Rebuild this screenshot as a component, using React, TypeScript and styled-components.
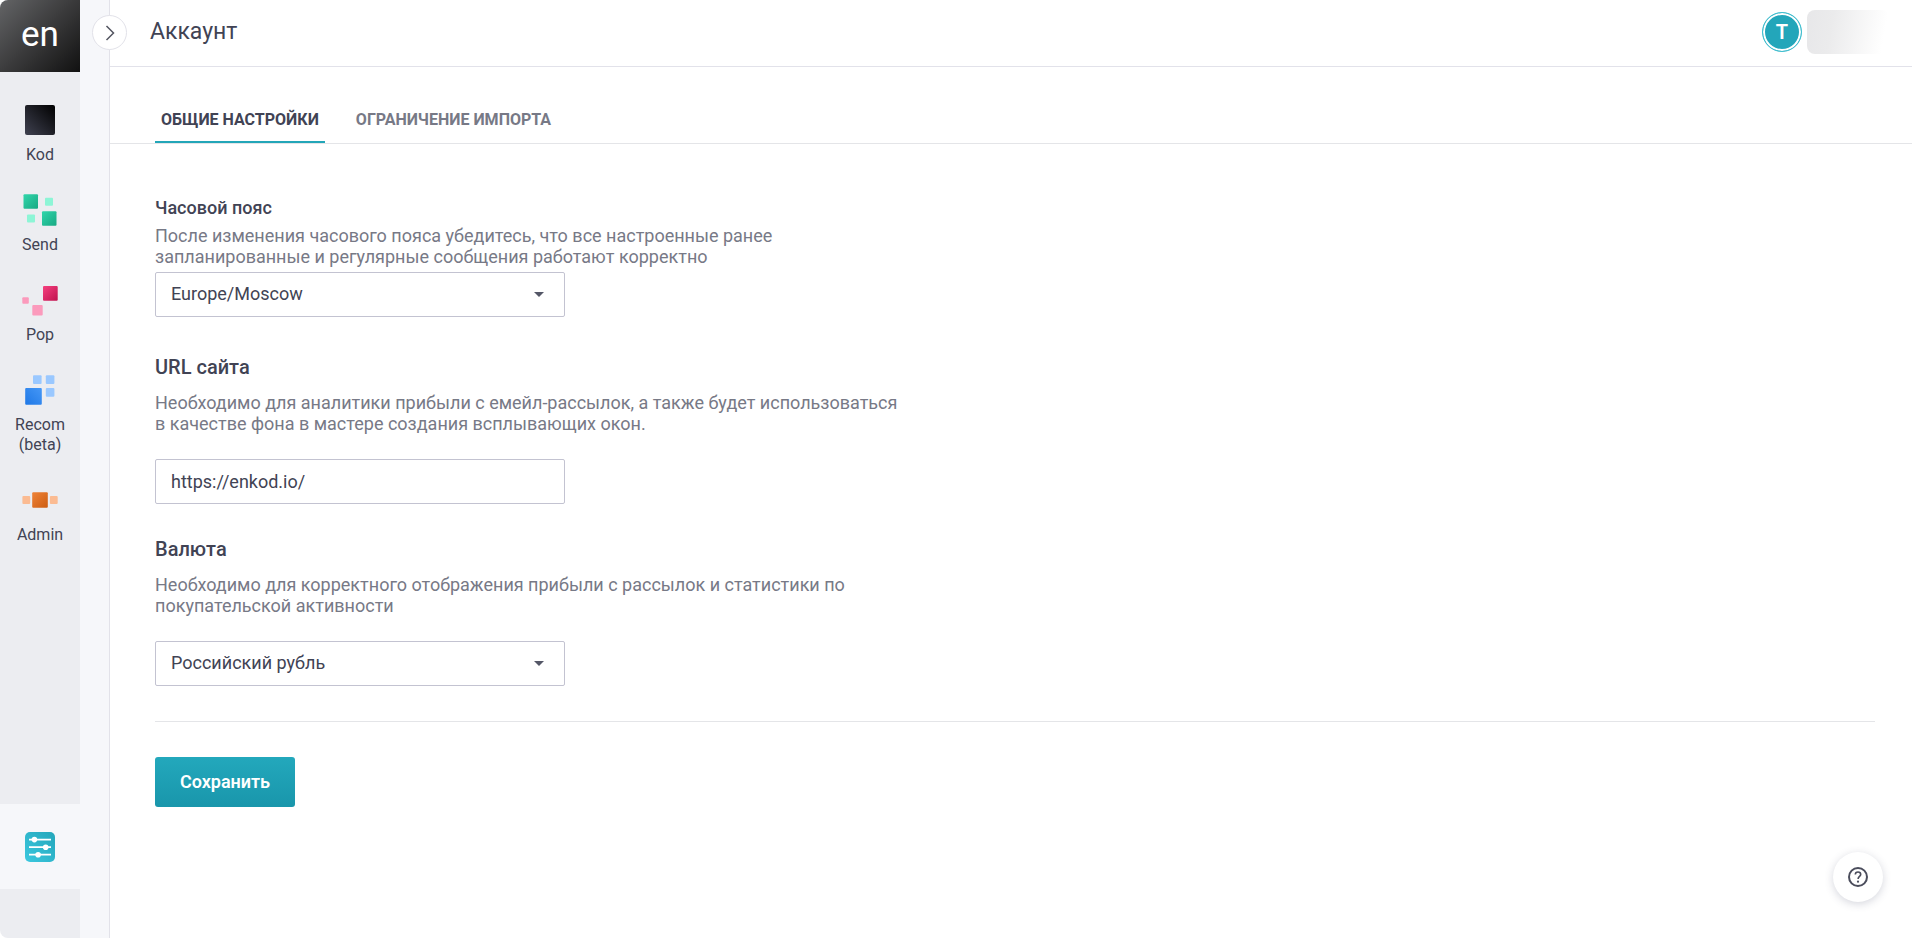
import React from "react";
import styled, { createGlobalStyle } from "styled-components";

const GlobalStyle = createGlobalStyle`
  *, *::before, *::after { box-sizing: border-box; }
  body {
    margin: 0;
    background: #ffffff;
    color: #414354;
    font-family: Roboto, "Liberation Sans", sans-serif;
    font-size: 18px;
    line-height: 21px;
  }
  button, input, select { font: inherit; color: inherit; }
  h1, h2, p { margin: 0; }
`;

const Page = styled.div`
  display: flex;
  min-height: 100vh;
`;

const Sidebar = styled.aside`
  display: flex;
  flex-direction: column;
  flex: none;
  width: 80px;
  overflow: hidden;
  border-radius: 8px 0 0 8px;
  background: #ecedf1;
`;

const Logo = styled.a`
  display: flex;
  align-items: center;
  justify-content: center;
  height: 72px;
  padding-bottom: 2px;
  background: linear-gradient(135deg, #636466 0%, #3a3a3b 50%, #111111 100%);
  color: #ffffff;
  font-size: 35px;
  line-height: 40px;
  text-decoration: none;
`;

const ProductNav = styled.nav`
  display: flex;
  flex: 1;
  flex-direction: column;
  gap: 30px;
  padding-top: 33px;
`;

const ProductLink = styled.a`
  display: flex;
  flex-direction: column;
  align-items: center;
  gap: 10px;
  color: inherit;
  font-size: 16px;
  line-height: 20px;
  text-align: center;
  text-decoration: none;
`;

const ProductIcon = styled.svg`
  display: block;
  width: 40px;
  height: 30px;
  overflow: visible;
`;

const SettingsLink = styled.a`
  display: flex;
  align-items: center;
  justify-content: center;
  height: 85px;
  margin-bottom: 49px;
  background: #f6f7fa;
`;

const MenuRail = styled.div`
  position: relative;
  flex: none;
  width: 30px;
  border-right: 1px solid #e2e2e9;
  background: #f6f7fa;
`;

const ExpandButton = styled.button`
  position: absolute;
  top: 15px;
  right: -18px;
  display: flex;
  align-items: center;
  justify-content: center;
  width: 35px;
  height: 35px;
  padding: 0;
  border: 1px solid #e2e2e9;
  border-radius: 50%;
  background: #ffffff;
  cursor: pointer;
`;

const Main = styled.main`
  flex: 1;
  min-width: 0;
`;

const Header = styled.header`
  display: flex;
  align-items: center;
  justify-content: space-between;
  height: 67px;
  padding: 0 22px 2px 40px;
  border-bottom: 1px solid #e2e2ea;
`;

const Title = styled.h1`
  font-size: 23px;
  font-weight: 400;
  line-height: 28px;
`;

const User = styled.div`
  display: flex;
  align-items: center;
  gap: 5px;
`;

const Avatar = styled.button`
  width: 40px;
  height: 40px;
  padding: 0;
  border: 1px solid #3fbfd0;
  border-radius: 50%;
  background: #23a6ba;
  box-shadow: inset 0 0 0 2px #ffffff;
  color: #ffffff;
  font-size: 20px;
  font-weight: 600;
  cursor: pointer;
`;

const UserName = styled.div`
  width: 83px;
  height: 44px;
  border-radius: 8px;
  background: linear-gradient(100deg, #e7e7e9 0%, #ebebec 30%, #ffffff 90%);
`;

const Tabs = styled.nav`
  display: flex;
  gap: 25px;
  height: 77px;
  padding: 31px 45px 0;
  border-bottom: 1px solid #e4e5e8;
`;

const Tab = styled.a<{ $active?: boolean }>`
  display: block;
  padding: 11px 6px 0;
  border-bottom: 2px solid ${(p) => (p.$active ? "#23a6b8" : "transparent")};
  color: ${(p) => (p.$active ? "#414354" : "#777986")};
  font-size: 16px;
  font-weight: 700;
  text-decoration: none;
`;

const Form = styled.form`
  padding: 53px 37px 40px 45px;
`;

const Field = styled.div<{ $compact?: boolean }>`
  display: flex;
  flex-direction: column;
  align-items: flex-start;
  margin-bottom: ${(p) => (p.$compact ? "38px" : "33px")};

  label {
    margin-bottom: ${(p) => (p.$compact ? "7px" : "13px")};
    font-size: ${(p) => (p.$compact ? "18px" : "20px")};
    font-weight: 500;
    line-height: ${(p) => (p.$compact ? "21px" : "24px")};
  }

  p {
    max-width: 750px;
    margin-bottom: ${(p) => (p.$compact ? "5px" : "25px")};
    color: #777986;
  }
`;

const Control = styled.div`
  position: relative;
  width: 410px;
  max-width: 100%;

  input, select {
    display: block;
    width: 100%;
    height: 45px;
    padding: 0 15px;
    border: 1px solid #c3c3d1;
    border-radius: 2px;
    background: #ffffff;
    appearance: none;
  }

  select {
    padding-bottom: 2px;
  }
`;

const Caret = styled.svg`
  position: absolute;
  top: 20px;
  right: 21px;
  pointer-events: none;
`;

const Actions = styled.div`
  margin-top: 35px;
  padding-top: 35px;
  border-top: 1px solid #e4e5e8;
`;

const SaveButton = styled.button`
  width: 140px;
  height: 50px;
  padding: 0 0 2px;
  border: 0;
  border-radius: 3px;
  background: linear-gradient(180deg, #23a8bc 0%, #1996ab 100%);
  color: #ffffff;
  font-weight: 600;
  cursor: pointer;
`;

const HelpButton = styled.button`
  position: fixed;
  right: 29px;
  bottom: 36px;
  display: flex;
  align-items: center;
  justify-content: center;
  width: 50px;
  height: 50px;
  padding: 0;
  border: 0;
  border-radius: 50%;
  background: #ffffff;
  box-shadow: 0 2px 8px rgba(65, 67, 100, 0.22);
  cursor: pointer;
`;

type Square = { x: number; y: number; size: number; fill: string };
type Product = { name: string; from: string; to: string; diagonal?: boolean; squares: Square[] };

const products: Product[] = [
  {
    name: "Kod",
    from: "#3f4150",
    to: "#000000",
    diagonal: true,
    squares: [{ x: 5, y: 0, size: 30, fill: "main" }],
  },
  {
    name: "Send",
    from: "#31d6ab",
    to: "#18a983",
    squares: [
      { x: 3.5, y: -0.7, size: 14.5, fill: "main" },
      { x: 25, y: 2.7, size: 8, fill: "#8df5d6" },
      { x: 7, y: 19.5, size: 8, fill: "#8df5d6" },
      { x: 22, y: 16.2, size: 14.5, fill: "main" },
    ],
  },
  {
    name: "Pop",
    from: "#f5407f",
    to: "#c0134f",
    squares: [
      { x: 23, y: 1, size: 14.7, fill: "main" },
      { x: 2.3, y: 12.3, size: 6.5, fill: "#fb9abc" },
      { x: 12.3, y: 20, size: 10.4, fill: "#fb9abc" },
    ],
  },
  {
    name: "Recom (beta)",
    from: "#1f78e6",
    to: "#4597f6",
    diagonal: true,
    squares: [
      { x: 13, y: 0.3, size: 8.6, fill: "#9ac8ff" },
      { x: 25.8, y: 0.3, size: 8.6, fill: "#9ac8ff" },
      { x: 25.8, y: 13.1, size: 8.6, fill: "#9ac8ff" },
      { x: 5.2, y: 13.1, size: 16.6, fill: "main" },
    ],
  },
  {
    name: "Admin",
    from: "#ef8338",
    to: "#cc5d12",
    squares: [
      { x: 2.4, y: 11.1, size: 7.8, fill: "#fbbb92" },
      { x: 12.2, y: 7.2, size: 15.6, fill: "main" },
      { x: 29.9, y: 11.1, size: 7.8, fill: "#fbbb92" },
    ],
  },
];

function ProductMark({ product, id }: { product: Product; id: string }) {
  return (
    <ProductIcon viewBox="0 0 40 30" aria-hidden="true">
      <defs>
        <linearGradient id={id} x1="0" x2="1" y1={product.diagonal ? 1 : 0} y2={product.diagonal ? 0 : 1}>
          <stop offset="0" stopColor={product.from} />
          <stop offset="1" stopColor={product.to} />
        </linearGradient>
      </defs>
      {product.squares.map((s) => (
        <rect
          key={`${s.x}-${s.y}`}
          x={s.x}
          y={s.y}
          width={s.size}
          height={s.size}
          rx={s.size > 20 ? 2 : 1}
          fill={s.fill === "main" ? `url(#${id})` : s.fill}
        />
      ))}
    </ProductIcon>
  );
}

function SettingsIcon() {
  return (
    <svg width="30" height="30" viewBox="0 0 30 30" aria-hidden="true">
      <defs>
        <linearGradient id="settings" x1="0" y1="1" x2="1" y2="0">
          <stop offset="0" stopColor="#3cc8df" />
          <stop offset="1" stopColor="#23a6ba" />
        </linearGradient>
      </defs>
      <rect width="30" height="30" rx="5" fill="url(#settings)" />
      <path d="M4 7.6h22M4 15.2h22M4 22.7h22" stroke="#ffffff" strokeWidth="1.7" />
      <circle cx="9.4" cy="7.6" r="2.8" fill="#ffffff" />
      <circle cx="20.7" cy="15.2" r="2.8" fill="#ffffff" />
      <circle cx="13.1" cy="22.7" r="2.8" fill="#ffffff" />
    </svg>
  );
}

function DropdownCaret() {
  return (
    <Caret width="10" height="5" viewBox="0 0 10 5" aria-hidden="true">
      <path d="M0 0h10L5 5z" fill="#545767" />
    </Caret>
  );
}

export default function App() {
  return (
    <>
      <GlobalStyle />
      <Page>
        <Sidebar>
          <Logo href="#home">en</Logo>
          <ProductNav>
            {products.map((product, index) => (
              <ProductLink key={product.name} href={`#product-${index}`}>
                <ProductMark product={product} id={`mark-${index}`} />
                {product.name}
              </ProductLink>
            ))}
          </ProductNav>
          <SettingsLink href="#settings" aria-label="Настройки">
            <SettingsIcon />
          </SettingsLink>
        </Sidebar>
        <MenuRail>
          <ExpandButton type="button" aria-label="Развернуть меню">
            <svg width="10" height="16" viewBox="0 0 10 16" fill="none" aria-hidden="true">
              <path d="M1.5 1l7 7-7 7" stroke="#545661" strokeWidth="1.5" />
            </svg>
          </ExpandButton>
        </MenuRail>
        <Main>
          <Header>
            <Title>Аккаунт</Title>
            <User>
              <Avatar type="button">T</Avatar>
              <UserName />
            </User>
          </Header>
          <Tabs>
            <Tab href="#general" $active>ОБЩИЕ НАСТРОЙКИ</Tab>
            <Tab href="#import">ОГРАНИЧЕНИЕ ИМПОРТА</Tab>
          </Tabs>
          <Form onSubmit={(e) => e.preventDefault()}>
            <Field $compact>
              <label htmlFor="timezone">Часовой пояс</label>
              <p>
                После изменения часового пояса убедитесь, что все настроенные ранее запланированные и
                регулярные сообщения работают корректно
              </p>
              <Control>
                <select id="timezone">
                  <option>Europe/Moscow</option>
                </select>
                <DropdownCaret />
              </Control>
            </Field>
            <Field>
              <label htmlFor="site">URL сайта</label>
              <p>
                Необходимо для аналитики прибыли с емейл-рассылок, а также будет использоваться в
                качестве фона в мастере создания всплывающих окон.
              </p>
              <Control>
                <input id="site" type="text" defaultValue="https://enkod.io/" />
              </Control>
            </Field>
            <Field>
              <label htmlFor="currency">Валюта</label>
              <p>
                Необходимо для корректного отображения прибыли с рассылок и статистики по покупательской
                активности
              </p>
              <Control>
                <select id="currency">
                  <option>Российский рубль</option>
                </select>
                <DropdownCaret />
              </Control>
            </Field>
            <Actions>
              <SaveButton type="submit">Сохранить</SaveButton>
            </Actions>
          </Form>
        </Main>
      </Page>
      <HelpButton type="button" aria-label="Помощь">
        <svg width="20" height="20" viewBox="0 0 20 20" fill="none" aria-hidden="true">
          <circle cx="10" cy="10" r="9" stroke="#4b4d5c" strokeWidth="2" />
          <path
            d="M7.3 7.6C7.3 6 8.4 5 10 5s2.7 1 2.7 2.4c0 1.9-2.6 2.1-2.6 4.6"
            stroke="#4b4d5c"
            strokeWidth="1.6"
          />
          <circle cx="10" cy="14.7" r="1.1" fill="#4b4d5c" />
        </svg>
      </HelpButton>
    </>
  );
}
